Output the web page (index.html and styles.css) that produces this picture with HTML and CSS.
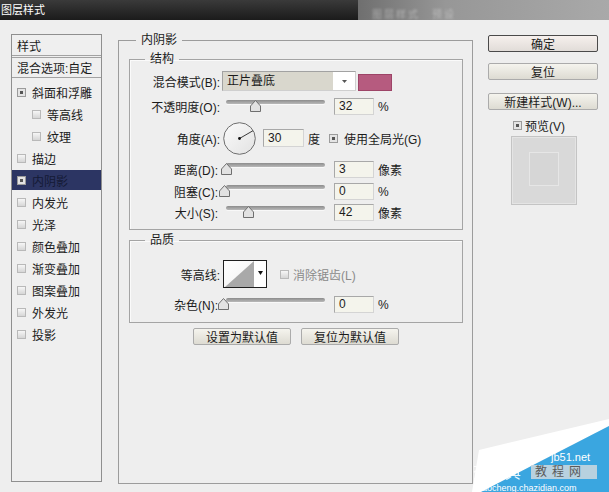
FILE: index.html
```html
<!DOCTYPE html>
<html lang="zh-CN">
<head>
<meta charset="utf-8">
<title>图层样式</title>
<link rel="stylesheet" href="styles.css">
</head>
<body>
<div class="titlebar">
  <div class="title">图层样式</div>
  <div class="title-blur"><span>图层样式　预设</span></div>
</div>
<div class="main">
  <ul class="style-list">
    <li class="head head-a">样式</li>
    <li class="head head-b">混合选项:自定</li>
    <li class="item"><i class="cb on"></i>斜面和浮雕</li>
    <li class="item sub"><i class="cb"></i>等高线</li>
    <li class="item sub"><i class="cb"></i>纹理</li>
    <li class="item"><i class="cb"></i>描边</li>
    <li class="item sel"><i class="cb on"></i>内阴影</li>
    <li class="item"><i class="cb"></i>内发光</li>
    <li class="item"><i class="cb"></i>光泽</li>
    <li class="item"><i class="cb"></i>颜色叠加</li>
    <li class="item"><i class="cb"></i>渐变叠加</li>
    <li class="item"><i class="cb"></i>图案叠加</li>
    <li class="item"><i class="cb"></i>外发光</li>
    <li class="item"><i class="cb"></i>投影</li>
  </ul>

  <fieldset class="group outer">
    <legend>内阴影</legend>

    <fieldset class="group inner struct">
      <legend>结构</legend>
      <div class="row r-blend">
        <label>混合模式(B):</label>
        <div class="select">
          <span class="sel-text">正片叠底</span>
          <span class="sel-arrow"><svg width="5" height="3" viewBox="0 0 5 3"><polygon points="0,0 5,0 2.5,3" fill="#555"/></svg></span>
        </div>
        <div class="swatch"></div>
      </div>
      <div class="row r-op">
        <label>不透明度(O):</label>
        <div class="slider"><div class="track"></div><svg class="thumb" style="left:29px" width="11" height="12" viewBox="0 0 11 12"><polygon points="5.5,0.5 10.5,6 10.5,11.5 0.5,11.5 0.5,6" fill="#e2e2e2" stroke="#6f6f6f"/></svg></div>
        <div class="num">32</div><span class="unit">%</span>
      </div>
      <div class="row r-angle">
        <label>角度(A):</label>
        <svg class="dial" width="33" height="33" viewBox="0 0 33 33">
          <defs><linearGradient id="dg" x1="0" y1="0" x2="1" y2="1"><stop offset="0" stop-color="#fbfbfb"/><stop offset="1" stop-color="#e2e2e2"/></linearGradient></defs>
          <circle cx="16.5" cy="16.5" r="15.8" fill="url(#dg)" stroke="#6e6e6e"/>
          <line x1="16.5" y1="16.5" x2="30" y2="8.7" stroke="#3a3a3a" stroke-width="1"/>
          <circle cx="16.5" cy="16.5" r="1.4" fill="#111"/>
        </svg>
        <div class="num num-angle">30</div><span class="unit">度</span>
        <i class="cb on cb-global"></i><span class="global">使用全局光(G)</span>
      </div>
      <div class="row r-dist">
        <label>距离(D):</label>
        <div class="slider"><div class="track"></div><svg class="thumb" style="left:0px" width="11" height="12" viewBox="0 0 11 12"><polygon points="5.5,0.5 10.5,6 10.5,11.5 0.5,11.5 0.5,6" fill="#e2e2e2" stroke="#6f6f6f"/></svg></div>
        <div class="num">3</div><span class="unit">像素</span>
      </div>
      <div class="row r-choke">
        <label>阻塞(C):</label>
        <div class="slider"><div class="track"></div><svg class="thumb" style="left:-2px" width="11" height="12" viewBox="0 0 11 12"><polygon points="5.5,0.5 10.5,6 10.5,11.5 0.5,11.5 0.5,6" fill="#e2e2e2" stroke="#6f6f6f"/></svg></div>
        <div class="num">0</div><span class="unit">%</span>
      </div>
      <div class="row r-size">
        <label>大小(S):</label>
        <div class="slider"><div class="track"></div><svg class="thumb" style="left:22px" width="11" height="12" viewBox="0 0 11 12"><polygon points="5.5,0.5 10.5,6 10.5,11.5 0.5,11.5 0.5,6" fill="#e2e2e2" stroke="#6f6f6f"/></svg></div>
        <div class="num">42</div><span class="unit">像素</span>
      </div>
    </fieldset>

    <fieldset class="group inner quality">
      <legend>品质</legend>
      <div class="row r-contour">
        <label>等高线:</label>
        <div class="contour">
          <svg class="curve" width="30" height="26" viewBox="0 0 30 26">
            <defs><linearGradient id="cg" x1="0" y1="0" x2="1" y2="1"><stop offset="0" stop-color="#ffffff"/><stop offset="1" stop-color="#f0f0f0"/></linearGradient></defs>
            <rect width="30" height="26" fill="url(#cg)"/>
            <polygon points="1,26 30,0 30,26" fill="#a9a9a9"/>
          </svg>
          <span class="c-arrow"><svg width="5" height="4" viewBox="0 0 5 4"><polygon points="0,0 5,0 2.5,4" fill="#111"/></svg></span>
        </div>
        <i class="cb cb-anti"></i><span class="disabled">消除锯齿(L)</span>
      </div>
      <div class="row r-noise">
        <label>杂色(N):</label>
        <div class="slider"><div class="track"></div><svg class="thumb" style="left:-3px" width="11" height="12" viewBox="0 0 11 12"><polygon points="5.5,0.5 10.5,6 10.5,11.5 0.5,11.5 0.5,6" fill="#e2e2e2" stroke="#6f6f6f"/></svg></div>
        <div class="num">0</div><span class="unit">%</span>
      </div>
    </fieldset>

    <div class="defaults">
      <div class="btn btn-small">设置为默认值</div>
      <div class="btn btn-small">复位为默认值</div>
    </div>
  </fieldset>

  <div class="side">
    <div class="btn btn-side default">确定</div>
    <div class="btn btn-side b-reset">复位</div>
    <div class="btn btn-side b-new">新建样式(W)...</div>
    <div class="preview-row"><i class="cb on"></i><span>预览(V)</span></div>
    <div class="preview"><div class="preview-inner"></div></div>
  </div>
</div>

<svg class="watermark" width="140" height="80" viewBox="0 0 140 80">
  <polygon points="3,80 10,38 140,7 140,14 12,80" fill="#ffffff"/>
  <polygon points="12,80 140,14 140,80" fill="#3aa6e0"/>
  <rect x="62" y="53" width="66" height="14" fill="#cfd8de" opacity="0.85"/>
  <text x="82" y="49" font-family="Liberation Sans, sans-serif" font-size="11" fill="#ffffff">jb51.net</text>
  <text x="66" y="64" font-family="Noto Sans CJK SC, sans-serif" font-size="12" letter-spacing="5" fill="#5a5a5a">教程网</text>
  <text x="4" y="66" font-family="Noto Sans CJK SC, sans-serif" font-size="16" fill="#ffffff" opacity="0.9">查字典</text>
  <text x="9" y="79" font-family="Liberation Sans, sans-serif" font-size="9" fill="#ffffff">jiaocheng.chazidian.com</text>
</svg>
</body>
</html>
```

FILE: styles.css
```css
* { box-sizing: border-box; }
html, body { margin: 0; padding: 0; }
body {
  width: 609px;
  height: 492px;
  overflow: hidden;
  position: relative;
  background: #eeeeee;
  font-family: "Liberation Sans", "Noto Sans CJK SC", sans-serif;
  font-size: 12px;
  color: #1b1b1b;
}

/* title bar */
.titlebar { display: flex; height: 20px; }
.title {
  width: 358px;
  background: linear-gradient(#3a3a3a, #1b1b1b);
  color: #ffffff;
  font-size: 11px;
  line-height: 20px;
  padding-left: 1px;
}
.title-blur {
  flex: 1;
  overflow: hidden;
  background: linear-gradient(90deg, #6f6f6f, #979797 35%, #a9a9a9);
}
.title-blur span {
  display: inline-block;
  margin: 9px 0 0 14px;
  font-size: 10px;
  line-height: 11px;
  letter-spacing: 2px;
  color: rgba(255, 255, 255, 0.35);
  filter: blur(1px);
  white-space: nowrap;
}

/* main area */
.main { display: flex; align-items: flex-start; padding: 14px 0 0 11px; }

/* left style list */
.style-list {
  list-style: none;
  margin: 0;
  padding: 0;
  width: 91px;
  height: 448px;
  border: 1px solid #8f8f8f;
  background: #efefef;
  flex: none;
}
.style-list li { display: flex; align-items: center; white-space: nowrap; }
.head { padding-left: 5px; }
.head-a { height: 23px; border-bottom: 3px double #a2a2a2; }
.head-b { height: 20px; border-bottom: 1px solid #a2a2a2; margin-bottom: 4px; }
.item { height: 20px; margin-bottom: 2px; padding-left: 5px; }
.item.sub { padding-left: 20px; }
.item .cb { margin-right: 6px; }
.item.sel { background: #2c3563; color: #141a35; }

.cb {
  display: inline-block;
  width: 9px;
  height: 9px;
  flex: none;
  border: 1px solid #b9b9b9;
  background: linear-gradient(#f6f6f6, #d6d6d6);
}
.cb.on {
  border-color: #9b9b9b;
  background: #555555;
  box-shadow: inset 0 0 0 2px #e4e4e4;
}

/* group boxes */
.group { margin: 0; padding: 0; border: 1px solid #9c9c9c; min-width: 0; }
.group > legend { padding: 0 5px; font-size: 12px; line-height: 12px; }
.outer {
  margin-left: 16px;
  width: 355px;
  height: 450px;
  padding: 0 0 0 10px;
  flex: none;
}
.outer > legend { margin-left: 7px; }
.inner { width: 334px; border-color: #a4a4a4; box-shadow: inset 1px 1px 0 #fafafa; }
.inner > legend { margin-left: 15px; }
.struct { margin-top: 7px; padding: 6px 0 8px 0; }
.quality { margin-top: 4px; padding: 14px 0 9px 0; }

/* rows */
.row { display: flex; align-items: center; height: 17px; white-space: nowrap; }
.row > label { width: 91px; flex: none; text-align: right; padding-right: 1px; }
.r-blend { height: 20px; }
.r-op { margin-top: 7px; }
.r-angle { margin-top: 7px; height: 32px; }
.r-dist { margin-top: 7px; }
.r-choke { margin-top: 5px; }
.r-size { margin-top: 4px; }
.r-contour { height: 28px; }
.r-noise { margin-top: 8px; }
.r-dist > label, .r-choke > label, .r-size > label, .r-noise > label { padding-right: 3px; }

/* select */
.select {
  margin-left: 1px;
  width: 134px;
  height: 20px;
  display: flex;
  border: 1px solid #a2a2a2;
  border-right-color: #cfcfcf;
  border-bottom-color: #cfcfcf;
  background: #d9d7cd;
}
.sel-text { flex: 1; padding-left: 4px; line-height: 18px; }
.sel-arrow {
  width: 22px;
  background: #ffffff;
  display: flex;
  align-items: center;
  justify-content: center;
}
.swatch {
  margin-left: 2px;
  margin-top: 2px;
  width: 34px;
  height: 17px;
  background: #b65b7f;
  border: 1px solid #9d4467;
}

/* slider */
.slider { position: relative; width: 113px; height: 17px; flex: none; }
.track {
  margin: 2px 0 0 5px;
  width: 99px;
  height: 4px;
  border-radius: 2px;
  background: linear-gradient(#8c8c8c, #b9b9b9);
  box-shadow: 0 1px 0 #f8f8f8;
}
.thumb { position: absolute; top: 2px; }

/* number field */
.num {
  width: 40px;
  height: 17px;
  flex: none;
  padding-left: 4px;
  line-height: 15px;
  background: #f4f4ec;
  border: 1px solid #a8a8a8;
  border-right-color: #d4d4d4;
  border-bottom-color: #d4d4d4;
}
.unit { margin-left: 4px; }

/* angle */
.dial { margin-left: 2px; flex: none; }
.num-angle { margin-left: 7px; width: 41px; height: 18px; line-height: 16px; }
.cb-global { margin-left: 9px; }
.global { margin-left: 6px; }

/* contour */
.contour {
  margin-left: 2px;
  width: 44px;
  height: 28px;
  display: flex;
  border: 1px solid #1f1f1f;
  background: #ffffff;
}
.curve { display: block; }
.c-arrow { flex: 1; display: flex; align-items: center; justify-content: center; padding-bottom: 2px; }
.cb-anti { margin-left: 13px; }
.disabled { margin-left: 4px; color: #8a8a8a; }

/* buttons */
.btn {
  display: flex;
  align-items: center;
  justify-content: center;
  height: 17px;
  border: 1px solid #ababab;
  border-radius: 2px;
  background: linear-gradient(#f5f4ee, #dddbd2);
  white-space: nowrap;
}
.defaults {
  margin-top: 5px;
  width: 334px;
  display: flex;
  justify-content: center;
  gap: 10px;
}
.btn-small { width: 98px; }

/* right column */
.side { margin-left: 15px; margin-top: 1px; width: 110px; display: flex; flex-direction: column; flex: none; }
.btn-side { width: 110px; }
.default { border-color: #4a4a4a; background: linear-gradient(#f6f0ed, #e1dcd8); }
.b-reset { margin-top: 11px; }
.b-new { margin-top: 13px; }
.preview-row { margin-top: 7px; height: 16px; display: flex; align-items: center; padding-left: 25px; }
.preview-row span { margin-left: 3px; }
.preview {
  margin: 3px 0 0 23px;
  width: 66px;
  height: 69px;
  background: #d9d9d9;
  border: 1px solid #c4c4c4;
  box-shadow: inset 0 0 0 1px #e4e4e4;
  display: flex;
  align-items: center;
  justify-content: center;
}
.preview-inner {
  width: 30px;
  height: 34px;
  margin-bottom: 4px;
  border: 1px solid #e6e6e6;
  background: #d6d6d6;
}

/* watermark overlay */
.watermark { position: absolute; right: 0; bottom: 0; display: block; }
```
